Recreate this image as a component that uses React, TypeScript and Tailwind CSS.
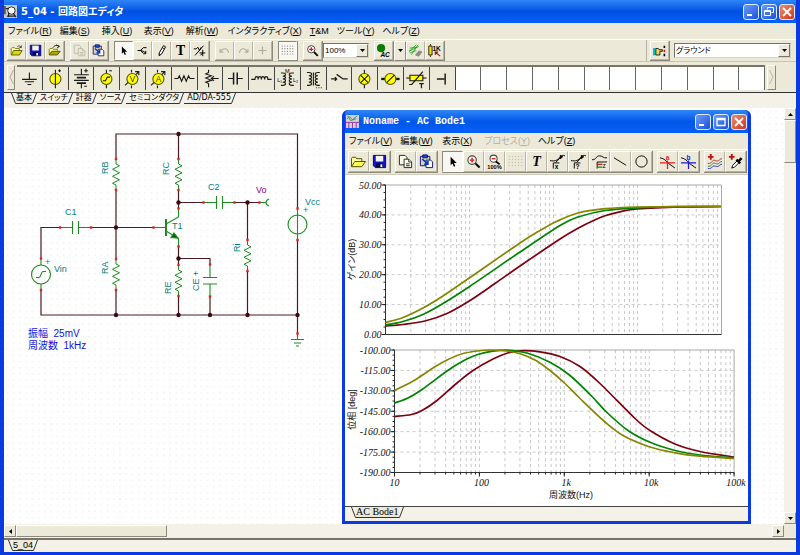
import type { ReactNode } from "react";
import clsx from "clsx";

type Point = [number, number];

interface ToolItem {
  label: string;
  icon: ReactNode;
  pressed?: boolean;
  disabled?: boolean;
}

/* ---------- toolbar icons ---------- */

const Icon = ({ children }: { children: ReactNode }) => (
  <svg viewBox="0 0 16 16" fill="none" stroke="#000" strokeWidth="1" className="w-full h-full" aria-hidden="true">
    {children}
  </svg>
);

const openIcon = (
  <Icon>
    <path d="M1.500 13V5.500l1-1h3l1 1h5v2.500" fill="#ffff9c" stroke="#6b6b00" />
    <path d="M1.500 13.500l3-5.500h10.500l-3.500 5.500z" fill="#e0d800" stroke="#4a4a00" />
    <path d="M9 3.200c2-1.500 3.500-1 4.500.8M14 1.800v2.500h-2.500" strokeWidth=".8" />
  </Icon>
);

const bodeOpenIcon = (
  <Icon>
    <path d="M.500 13V4.500l1-1h3.500l1 1.500h5.500v3" fill="#ffff9c" stroke="#4a4a00" />
    <path d="M.500 13.500l3.500-5.500h11.500l-4 5.500z" fill="#ffff50" stroke="#4a4a00" />
  </Icon>
);

const openAltIcon = (
  <Icon>
    <path d="M1.500 13V6.500l1-1h3l1 1h5v2" fill="#ffff9c" stroke="#6b6b00" />
    <path d="M1.500 13.500l3-4.500h10.500l-3.500 4.500z" fill="#a8a800" stroke="#4a4a00" />
    <path d="M6 4.500c2-3 5-3.500 8-1.500M10 1l4 2-3 2" />
  </Icon>
);

const saveIcon = (
  <Icon>
    <path d="M1.500 1.500h13v13h-11l-2-2z" fill="#1414c8" stroke="#000060" />
    <path d="M4 2h8v6H4z" fill="#f4f4f4" stroke="none" />
    <path d="M4.500 10h7v4h-7z" fill="#000040" stroke="none" />
    <path d="M9 11h2v3H9z" fill="#fff" stroke="none" />
  </Icon>
);

const copyShape = (stroke: string, fill: string) => (
  <Icon>
    <g stroke={stroke} fill={fill}>
      <path d="M1.500 1.500h6l2 2v8h-8z" />
      <path d="M6.500 5.500h5l3 3v6h-8z" />
      <path d="M11.500 5.500v3h3M8.500 10.500h4M8.500 12.500h4" />
    </g>
  </Icon>
);

const pasteIcon = (
  <Icon>
    <path d="M1.500 2.500h10v10h-10z" fill="#d8d4b0" stroke="#101080" />
    <path d="M4 1h5v3H4z" fill="#2050e0" stroke="#001070" />
    <path d="M7.500 6.500h5l2 2v6h-7z" fill="#fff" stroke="#101060" />
    <path d="M3.500 5.500l6 5M9.500 7v4h-4" stroke="#0030c0" strokeWidth="1.600" />
  </Icon>
);

const cursorIcon = (
  <Icon>
    <path d="M6 3v9l2-2 1.500 3.500 1.500-.7L9.500 9.500h3z" fill="#000" stroke="none" />
  </Icon>
);

const wireIcon = (
  <Icon>
    <path d="M2 8h5M13 4.500H9L5.500 8 9 11.500M7 8l5 3M12 8.500v3.500H9" strokeWidth="1.200" />
  </Icon>
);

const pencilIcon = (
  <Icon>
    <path d="M10.500 2l2.500 1.500-5 9-3 1.800.3-3.500z" fill="#fff" strokeWidth="1.200" />
    <path d="M9 4.500l2.500 1.500M5 12l1.500 1.500" />
  </Icon>
);

const textIcon = (
  <Icon>
    <text x="8" y="14" textAnchor="middle" fill="#000" stroke="none" fontSize="17" fontWeight="700" fontFamily="'Liberation Serif', serif">T</text>
  </Icon>
);

const italicTextIcon = (
  <Icon>
    <text x="8" y="13" textAnchor="middle" fill="#000" stroke="none" fontSize="15" fontWeight="700" fontStyle="italic" fontFamily="'Liberation Serif', serif">T</text>
  </Icon>
);

const rotateIcon = (
  <Icon>
    <path d="M1 6h3l2-2 2 4 2-4M2.500 14L13 2M8 11h7M12 7v8M9 14l3-3" strokeWidth="1.200" />
  </Icon>
);

const undoIcon = (
  <Icon>
    <path d="M2.500 10V6M2.500 10h4M3 9.500c3-5 9-5 10 1.500" stroke="#b0ac9c" strokeWidth="1.300" />
  </Icon>
);

const redoIcon = (
  <Icon>
    <path d="M13.500 10V6M13.500 10h-4M13 9.500c-3-5-9-5-10 1.500" stroke="#b0ac9c" strokeWidth="1.300" />
  </Icon>
);

const moveIcon = (
  <Icon>
    <path d="M8 3v10M3 8h10" stroke="#b0ac9c" strokeWidth="1.500" />
  </Icon>
);

const dots = [1.5, 4.75, 8, 11.25, 14.5];
const gridIcon = (color: string) => (
  <Icon>
    {dots.map((x) => dots.slice(0, 4).map((y) => (
      <circle key={`${x}-${y}`} cx={x} cy={y + 1} r=".7" fill={color} stroke="none" />
    )))}
  </Icon>
);

const zoomInIcon = (
  <Icon>
    <circle cx="6.500" cy="6.500" r="4.500" fill="#fff" stroke="#444" strokeWidth="1.200" />
    <path d="M6.500 4v5M4 6.500h5" stroke="#e01010" strokeWidth="1.500" />
    <path d="M10 10l4.500 4.500" strokeWidth="2.200" />
  </Icon>
);

const zoomOutIcon = (
  <Icon>
    <circle cx="7" cy="5" r="3.800" fill="#fff" stroke="#444" strokeWidth="1.100" />
    <path d="M5 5h4" stroke="#e01010" strokeWidth="1.400" />
    <path d="M9.500 8l4 3" strokeWidth="1.800" />
    <text x="8" y="15.500" textAnchor="middle" fill="#000" stroke="none" fontSize="6" fontWeight="700" fontFamily="'Liberation Sans', sans-serif">100%</text>
  </Icon>
);

const acIcon = (
  <Icon>
    <circle cx="5" cy="5" r="4.800" fill="#008000" stroke="#004000" strokeWidth=".5" />
    <text x="10" y="15.500" textAnchor="middle" fill="#000" stroke="none" fontSize="8" fontStyle="italic" fontWeight="700" fontFamily="'Liberation Sans', sans-serif">AC</text>
  </Icon>
);

const probeIcon = (
  <Icon>
    <path d="M0 9l9-8M0 9l12-6M3 13L11 1M1 5l9-1M1 11l8-3" stroke="#18a018" />
    <path d="M8 13.500l4-5 4 1-4 5.500z" fill="#8a8a86" stroke="#8a8a86" />
  </Icon>
);

const meterIcon = (
  <Icon>
    <path d="M3 0v2M3 14v2" />
    <path d="M1 2.500h4v11H1z" fill="#f4e800" />
    <text x="10.500" y="8" textAnchor="middle" fill="#000" stroke="none" fontSize="8" fontWeight="700" fontFamily="'Liberation Sans', sans-serif">1K</text>
    <path d="M15 15L9 10M9 13.500V10h3.500" stroke="#a01010" strokeWidth="1.300" />
  </Icon>
);

const handIcon = (
  <Icon>
    <path d="M0 5h3v9H0z" fill="#10b8c0" stroke="none" />
    <path d="M3.500 5.500h3l1 1.500h4v2h-3v4.500h-5z" fill="#e8d860" />
    <path d="M14 2v3M14 12v3" strokeWidth="2" />
    <path d="M14 7v3" stroke="#e01010" strokeWidth="2" />
  </Icon>
);

const curveLabelIcon = (label: string) => (
  <Icon>
    <path d="M0 7c5 1 8 0 11-4 1-1.500 3-2 5-1M6 9l6-6" />
    <path d="M11 1.500l2.500 1.500-2.500 2z" fill="#000" />
    <path d="M3.500 15.500V9.500H10" />
    <text x="7" y="15.500" textAnchor="middle" fill="#000" stroke="none" fontSize="7" fontWeight="700" fontFamily="'Liberation Sans', sans-serif">{label}</text>
  </Icon>
);

const legendIcon = (
  <Icon>
    <path d="M0 6c4 1 4-4 8-4s4 3 8 2" />
    <path d="M5.500 15.500V8.500H16" />
    <path d="M6 11h5" stroke="#d01010" strokeWidth="1.300" />
    <path d="M6 14h5" stroke="#108010" strokeWidth="1.300" />
    <text x="13" y="15" textAnchor="middle" fill="#000" stroke="none" fontSize="7" fontFamily="'Liberation Sans', sans-serif">z</text>
  </Icon>
);

const lineIcon = (
  <Icon>
    <path d="M1 4l13 8" />
  </Icon>
);

const circleIcon = (
  <Icon>
    <circle cx="8" cy="8" r="6" />
  </Icon>
);

const axisIcon = (name: string, color: string) => (
  <Icon>
    <path d="M0 4c5 1 6 3 9 6l7 5" />
    <path d="M0 9.500h16M8 7v9" stroke={color} strokeWidth="1.300" />
    <text x="8" y="6.500" textAnchor="middle" fill={color} stroke="none" fontSize="7" fontWeight="700" fontFamily="'Liberation Sans', sans-serif">{name}</text>
  </Icon>
);

const addCurveIcon = (
  <Icon>
    <path d="M4 0v6M1 3h6" stroke="#c01010" strokeWidth="2" />
    <path d="M1 10c5 1 4-5 8-3s4-2 7-2" stroke="#c02020" />
    <path d="M1 13c5 1 4-5 8-3s4-2 7-2" stroke="#109010" />
    <path d="M1 15.500c5 1 4-4 8-2.500s4-2 7-2" stroke="#2020d0" />
  </Icon>
);

const pickColorIcon = (
  <Icon>
    <path d="M4 0v6M1 3h6" stroke="#c01010" strokeWidth="2" />
    <path d="M4 15l1-3 5-5 2 2-5 5z" fill="#fff" />
    <path d="M9 6l4 4M11 8l3.500-3.500" strokeWidth="2.600" />
  </Icon>
);

/* ---------- component palette symbols ---------- */

const Ball = () => <circle cx="13" cy="13" r="6" fill="#ffff00" stroke="#555500" />;

const ballText = (letter: string) => (
  <>
    <path d="M5 20L20 5M16 5h4v4M12 3v3M12 20v3" />
    <Ball />
    <text x="13" y="16" textAnchor="middle" fill="#333300" stroke="none" fontSize="9" fontFamily="'Liberation Sans', sans-serif">{letter}</text>
  </>
);

const parts: { name: string; symbol: ReactNode }[] = [
  { name: "Ground", symbol: <path d="M13 6v7M5 13.500h16M8 16h10M11 19h4" /> },
  { name: "Voltage source", symbol: <><path d="M13 3v20M16 4h3M17.500 2.500v3" /><Ball /><path d="M13 7v12" /></> },
  { name: "Battery", symbol: <><path d="M13 2v6M13 18v5M5 8.500h16M5 14.500h16M16 4h4M18 2v4M16 21h3" /><path d="M8 11.500h10M8 17.500h10" strokeWidth="2" /></> },
  { name: "Generator", symbol: <><path d="M13 3v20M16 4h3" /><Ball /><path d="M9 15h3l2-4h3" /></> },
  { name: "Voltmeter", symbol: ballText("V") },
  { name: "Ammeter", symbol: ballText("A") },
  { name: "Resistor", symbol: <path d="M2 12.500h4l1.500-3 2.500 6 2.500-6 2.500 6 2.500-6 1.500 3H24" /> },
  { name: "Potentiometer", symbol: <path d="M11 3v3l-3 1.500 6 2-6 2.500 6 2.500-6 2 3 1.500v4M22 12.500h-7M17 10l-3 2.500 3 2.500" /> },
  { name: "Capacitor", symbol: <><path d="M5 12.500h6M15 12.500h6" /><path d="M11 6v13M15 6v13" strokeWidth="1.600" /></> },
  { name: "Inductor", symbol: <path d="M2 13.500h4c0-4 3.500-4 3.500 0 0-4 3.500-4 3.500 0 0-4 3.500-4 3.500 0 0-4 3.500-4 3.500 0H24" /> },
  {
    name: "Coupled inductors",
    symbol: (
      <>
        <path d="M6 6.500h2c4 0 4 3.500 0 3.500 4 0 4 3 0 3 4 0 4 3.500 0 3.500 4 0 4 3.500 0 3.500H6M20 6.500h-2c-4 0-4 3.500 0 3.500-4 0-4 3 0 3-4 0-4 3.500 0 3.500-4 0-4 3.500 0 3.500h2" />
        <g fill="#000" stroke="none" fontSize="6" fontFamily="'Liberation Sans', sans-serif">
          <text x="10.500" y="6">M</text>
          <text x="2" y="16">L₁</text>
          <text x="19" y="16">L₂</text>
        </g>
      </>
    ),
  },
  { name: "Transformer", symbol: <><path d="M6 6h2c4 0 4 3.500 0 3.500 4 0 4 3.500 0 3.500 4 0 4 3.500 0 3.500 4 0 4 3.500 0 3.500H6M20 6h-2c-4 0-4 3.500 0 3.500-4 0-4 3.500 0 3.500-4 0-4 3.500 0 3.500-4 0-4 3.500 0 3.500h2M13 6v14" /><path d="M16 22.500h7" strokeDasharray="1 1.500" /></> },
  { name: "Switch", symbol: <path d="M4 13h6M8 11l2 2-2 2M10 8l7 5h5" strokeWidth="1.400" /> },
  { name: "Lamp", symbol: <><path d="M13 3v20" /><Ball /><path d="M9 9l8 8M17 9l-8 8" /></> },
  { name: "Motor", symbol: <><path d="M3 13h20" strokeWidth="2.500" /><Ball /><path d="M9 17l8-8" /></> },
  { name: "Thermistor", symbol: <><path d="M2 12h22" /><path d="M6 9h14v6H6z" fill="#ffff00" /><path d="M5 19h3L20 5M16 18h5M18.500 18v5" strokeWidth="1.300" /></> },
  { name: "Terminal", symbol: <path d="M7 13h8M16 7v12" strokeWidth="1.600" /> },
];

const emptySlots = Array.from({ length: 12 }, (_, i) => i);

/* ---------- small controls ---------- */

function ToolGroup({ items, size }: { items: ToolItem[]; size: "sm" | "md" }) {
  return (
    <div className="flex border-r border-b border-[#8c897c]">
      {items.map((item) => (
        <button
          key={item.label}
          type="button"
          title={item.label}
          aria-label={item.label}
          disabled={item.disabled}
          className={clsx(
            "flex items-center justify-center border p-[2px]",
            size === "sm" ? "w-[19px] h-[19px]" : "w-[21px] h-[21px]",
            item.pressed
              ? "bg-[#f8f7f2] border-l-[#8c897c] border-t-[#8c897c] border-r-white border-b-white"
              : "bg-[#ece9d8] border-l-white border-t-white border-r-[#b8b4a3] border-b-[#b8b4a3]"
          )}
        >
          {item.icon}
        </button>
      ))}
    </div>
  );
}

function Combo({ label, value, className }: { label: string; value: string; className: string }) {
  return (
    <div className={clsx("relative h-[15px] bg-white border border-l-[#77756a] border-t-[#77756a] border-r-[#d8d4c4] border-b-[#d8d4c4]", className)}>
      <select
        aria-label={label}
        defaultValue={value}
        className="block appearance-none w-full h-full bg-transparent pl-px text-[8px] leading-[12px] outline-none"
      >
        <option>{value}</option>
      </select>
      <span className="absolute right-0 top-0 bottom-0 w-3 flex items-center justify-center bg-[#ece9d8] border border-l-white border-t-white border-r-[#77756a] border-b-[#77756a] pointer-events-none">
        <Arrow d="M1 2h5L3.500 5z" />
      </span>
    </div>
  );
}

const Arrow = ({ d }: { d: string }) => (
  <svg viewBox="0 0 7 7" className="w-[7px] h-[7px]" aria-hidden="true">
    <path d={d} />
  </svg>
);

function ScrollButton({ label, d }: { label: string; d: string }) {
  return (
    <button
      type="button"
      aria-label={label}
      className="w-3 h-3 shrink-0 flex items-center justify-center bg-[#ece9d8] border border-l-white border-t-white border-r-[#8c897c] border-b-[#8c897c]"
    >
      <Arrow d={d} />
    </button>
  );
}

function WindowButtons({ restore }: { restore?: boolean }) {
  const blue = "bg-linear-to-br from-[#6b9bf8] to-[#1c4fd8]";
  const base = "w-4 h-4 rounded-[3px] border border-[#dfe9ff] flex items-center justify-center";
  return (
    <div className="flex gap-[2px]">
      <button type="button" aria-label="Minimize" className={clsx(base, blue)}>
        <svg viewBox="0 0 12 12" className="w-3 h-3"><path d="M2 8h5v2H2z" fill="#fff" /></svg>
      </button>
      <button type="button" aria-label={restore ? "Restore" : "Maximize"} className={clsx(base, blue)}>
        <svg viewBox="0 0 12 12" className="w-3 h-3" fill="none" stroke="#fff">
          {restore ? (
            <path d="M4.500 3.500v-2h6v5h-2M1.500 4.500h6v5h-6zM1.500 5.500h6" />
          ) : (
            <path d="M2 2.500h8v7H2zM2 3.500h8" strokeWidth="1.300" />
          )}
        </svg>
      </button>
      <button type="button" aria-label="Close" className={clsx(base, "bg-linear-to-br from-[#f08a6a] to-[#cc3310]")}>
        <svg viewBox="0 0 12 12" className="w-3 h-3" stroke="#fff" strokeWidth="1.800"><path d="M2 2l8 8M10 2l-8 8" /></svg>
      </button>
    </div>
  );
}

interface MenuEntry {
  text: string;
  hotkey: string;
  disabled?: boolean;
}

function MenuBar({ items, label, className }: { items: MenuEntry[]; label: string; className: string }) {
  return (
    <nav aria-label={label} className={clsx("flex h-4 items-center gap-2 bg-[#ece9d8] whitespace-nowrap text-[9px] leading-[14px]", className)}>
      {items.map(({ text, hotkey, disabled }) => (
        <button
          key={text + hotkey}
          type="button"
          disabled={disabled}
          className={clsx("text-left", text.length === 2 && "min-w-[34px]", disabled ? "text-[#b3af9f]" : "text-black")}
        >
          {text === "T&M" ? <><u>T</u>&amp;M</> : <>{text}(<u>{hotkey}</u>)</>}
        </button>
      ))}
    </nav>
  );
}

/* ---------- schematic ---------- */

const WIRE = "#4a1a20";
const PART = "#1f8a1f";

// zigzag body of a vertical resistor with its two leads
function VResistor({ x, y }: { x: number; y: number }) {
  return (
    <>
      <path
        d={`M${x} ${y}v5l3.500 1.800-7 3.500 7 3.500-7 3.500 7 3.500-7 3.500 3.500 1.700v5`}
        stroke={PART}
        fill="none"
      />
      <Pins points={[[x, y], [x, y + 31]]} />
    </>
  );
}

const Pins = ({ points }: { points: Point[] }) => (
  <>
    {points.map(([x, y]) => (
      <rect key={`${x}-${y}`} x={x - 1.2} y={y - 1.2} width="2.400" height="2.400" fill="#e02020" stroke="none" />
    ))}
  </>
);

const nodes: Point[] = [
  [178.5, 134], [178.5, 202.5], [116, 227.5], [178.5, 258.5], [247.5, 202.5],
  [116, 315], [178.5, 315], [210, 315], [247.5, 315], [297.5, 315],
];

const labels: { text: string; x: number; y: number; rotated?: boolean; color?: string }[] = [
  { text: "C1", x: 65, y: 215 },
  { text: "C2", x: 208, y: 190 },
  { text: "T1", x: 172, y: 229 },
  { text: "Vin", x: 54, y: 272 },
  { text: "+", x: 45, y: 265 },
  { text: "Vcc", x: 305, y: 205 },
  { text: "+", x: 303, y: 213 },
  { text: "Vo", x: 256, y: 193, color: "#8a008a" },
  { text: "RB", x: 108, y: 174, rotated: true },
  { text: "RC", x: 169, y: 175, rotated: true },
  { text: "RA", x: 108, y: 274, rotated: true },
  { text: "RE", x: 171, y: 294, rotated: true },
  { text: "CE +", x: 199, y: 291, rotated: true },
  { text: "Ri", x: 240, y: 252, rotated: true },
];

function Schematic() {
  return (
    <svg className="block w-full h-full" role="img" aria-label="5_04">
      <defs>
        <pattern id="dots" width="6.250" height="6.250" patternUnits="userSpaceOnUse">
          <rect x="3" y="3" width="1" height="1" fill="#dcdce0" />
        </pattern>
      </defs>
      <rect width="100%" height="100%" fill="url(#dots)" />
      <g transform="translate(-4 -108)" fill="none">
        <g stroke={WIRE} strokeWidth="1.200">
          <path d="M116 159V134H297.500V208M178.500 134v25M116 190v69M116 290v25M178.500 190v18M178.500 246v18M178.500 296v19" />
          <path d="M60 227.500H41V258M41 290v25H297.500V240M91 227.500h62M178.500 202.500h25M234.500 202.500h25M247.500 202.500v37M247.500 271v44" />
          <path d="M178.500 258.500H210v6M210 296v19M297.500 315v18" />
        </g>
        <g stroke={PART} strokeWidth="1.100">
          <path d="M60 227.500h12.500M78.500 227.500H91M72.500 221v13M78.500 221v13" />
          <path d="M204 202.500h12.500M222.500 202.500h12M216.500 196v13M222.500 196v13" />
          <path d="M210 265v12.500M210 284v12M203 277.500h14M203 284h14" />
          <circle cx="41" cy="274.500" r="9.500" />
          <path d="M41 259v6M41 284v6M36 277.500h3c2 0 2-6 4-6h3" />
          <circle cx="297.500" cy="224.500" r="9.500" />
          <path d="M297.500 209v31" />
          <path d="M297.500 334v5.500M291 339.500h13M294 343h7M296 346h3" />
          <path d="M260 202.500h6M269 199c-4 1.500-4 5.500 0 7" />
          <path d="M153.500 227.500H166M166 224l12.500-7v-8M166 231l12.500 7.500v8" />
          <path d="M166 219v17" strokeWidth="2" />
          <path d="M178 238l-4-5-3 4.500z" fill="#006000" />
        </g>
        <VResistor x={116} y={159} />
        <VResistor x={178.5} y={159} />
        <VResistor x={116} y={259} />
        <VResistor x={178.5} y={265} />
        <VResistor x={247.5} y={240} />
        <Pins
          points={[
            [60, 227.5], [91, 227.5], [153.5, 227.5], [178.5, 208.5], [178.5, 246.5], [203.5, 202.5], [234.5, 202.5],
            [259.5, 202.5], [210, 264.5], [210, 296.5], [41, 258.5], [41, 290], [297.5, 208.5], [297.5, 240], [297.5, 333.5],
          ]}
        />
        {nodes.map(([x, y]) => (
          <circle key={`${x}-${y}`} cx={x} cy={y} r="2.200" fill="#3a0c10" />
        ))}
        <g fontSize="9" fontFamily="'Liberation Sans', sans-serif" stroke="none">
          {labels.map(({ text, x, y, rotated, color = "#008080" }) => (
            <text key={`${text}-${x}`} x={x} y={y} fill={color} transform={rotated ? `rotate(-90 ${x} ${y})` : undefined}>
              {text}
            </text>
          ))}
        </g>
        <g fill="#1010e0" stroke="none" fontSize="10" fontFamily="'Liberation Sans', 'Noto Sans CJK JP', sans-serif">
          <text x="28" y="337">振幅&nbsp; 25mV</text>
          <text x="28" y="349">周波数&nbsp; 1kHz</text>
        </g>
      </g>
    </svg>
  );
}

/* ---------- bode charts ---------- */

const OLIVE = "#858500";
const GREEN = "#008400";
const MAROON = "#7c0010";

const gainCurves: { color: string; points: Point[] }[] = [
  {
    color: MAROON,
    points: [[385.5, 325.5], [403, 324], [425, 320.5], [447, 313], [470, 300], [495, 283], [520, 265.5], [560, 238.5], [578, 227.8], [593, 220.3], [605, 215.3], [622, 210.8], [637, 208.5], [680, 206.5], [721, 206]],
  },
  {
    color: GREEN,
    points: [[385.5, 324.5], [403, 321], [423, 314], [443, 303], [470, 285.7], [520, 251.5], [560, 225], [578, 216.5], [605, 210], [637, 207.3], [680, 206.2], [721, 206]],
  },
  {
    color: OLIVE,
    points: [[385.5, 322], [403, 317], [423, 307.5], [443, 295.5], [470, 277], [520, 242.5], [540, 230], [557, 220.8], [578, 212.5], [605, 208.2], [637, 206.5], [680, 206], [721, 206]],
  },
];

const phaseCurves: { color: string; points: Point[] }[] = [
  {
    color: MAROON,
    points: [[394.5, 416], [411.5, 414], [422, 410], [437, 400], [457, 382.5], [473, 370], [493, 358.5], [507, 352.7], [520, 350.3], [540, 351.3], [560, 356], [580, 366], [600, 383], [635, 418], [650, 430], [675, 443.5], [700, 451], [734, 456.5]],
  },
  {
    color: GREEN,
    points: [[394.5, 402.5], [408, 397.5], [422, 389], [447, 370.5], [463, 360.5], [477, 354.3], [493, 350.7], [510, 349.8], [527, 352.5], [550, 361.7], [570, 375], [592, 396], [607, 412], [628, 430], [650, 441.8], [675, 450], [700, 454.5], [734, 457.3]],
  },
  {
    color: OLIVE,
    points: [[394.5, 390], [415, 379.5], [437, 365], [457, 355], [473, 351], [490, 349.5], [507, 350.5], [520, 353.3], [535, 359.5], [550, 370], [565, 383], [580, 398], [605, 421.5], [623, 435], [650, 446.5], [675, 452.3], [700, 455.7], [734, 458]],
  },
];

// Catmull-Rom spline through the sampled points
function smooth(points: Point[]) {
  let d = `M${points[0][0]} ${points[0][1]}`;
  for (let i = 0; i < points.length - 1; i++) {
    const p0 = points[Math.max(i - 1, 0)];
    const p1 = points[i];
    const p2 = points[i + 1];
    const p3 = points[Math.min(i + 2, points.length - 1)];
    d += `C${p1[0] + (p2[0] - p0[0]) / 6} ${p1[1] + (p2[1] - p0[1]) / 6} ${p2[0] - (p3[0] - p1[0]) / 6} ${p2[1] - (p3[1] - p1[1]) / 6} ${p2[0]} ${p2[1]}`;
  }
  return d;
}

interface ChartProps {
  left: number;
  top: number;
  decade: number;
  height: number;
  ticks: string[];
  xTicks?: string[];
  curves: { color: string; points: Point[] }[];
}

function Chart({ left, top, decade, height, ticks, xTicks, curves }: ChartProps) {
  const right = left + decade * 4;
  const bottom = top + height;
  const step = height / (ticks.length - 1);
  const verticals = [0, 1, 2, 3].flatMap((d) =>
    [2, 3, 4, 5, 6, 7, 8, 9, 10].map((n) => left + decade * (d + Math.log10(n)))
  );
  const minor = Array.from({ length: (ticks.length - 1) * 4 }, (_, i) => top + (step / 4) * i);

  return (
    <g fill="none">
      <g stroke="#c8c8c8" strokeDasharray="3 3">
        {verticals.slice(0, -1).map((x) => <path key={x} d={`M${x} ${top}V${bottom}`} />)}
        {ticks.slice(1, -1).map((t, i) => <path key={t} d={`M${left} ${top + step * (i + 1)}H${right}`} />)}
      </g>
      <path d={`M${left} ${top}H${right}V${bottom}`} stroke="#a8a8a8" />
      <path d={`M${left} ${top}V${bottom}H${right}`} stroke="#333" />
      <g stroke="#222">
        {ticks.map((t, i) => <path key={t} d={`M${left - 4} ${top + step * i}h4`} />)}
        {minor.map((y) => <path key={y} d={`M${left - 2} ${y}h2`} />)}
        {xTicks && verticals.map((x) => <path key={x} d={`M${x} ${bottom}v2`} />)}
        {xTicks && xTicks.map((t, i) => <path key={t} d={`M${left + decade * i} ${bottom}v4`} />)}
      </g>
      {curves.map(({ color, points }) => (
        <path key={color} d={smooth(points)} stroke={color} strokeWidth="1.700" />
      ))}
      <g fill="#111" stroke="none" fontSize="10" fontStyle="italic" fontFamily="'Liberation Serif', serif">
        {ticks.map((t, i) => (
          <text key={t} x={left - 4} y={top + step * i + 3.5} textAnchor="end">{t}</text>
        ))}
        {xTicks && xTicks.map((t, i) => (
          <text key={t} x={left + decade * i + (i ? 2 : 0)} y={bottom + 13} textAnchor="middle">{t}</text>
        ))}
      </g>
    </g>
  );
}

function BodePlot() {
  return (
    <svg viewBox="345 175 403 330" className="block w-full h-full" role="img" aria-label="AC Bode1">
      <Chart
        left={385.5}
        top={184.5}
        decade={84}
        height={149.5}
        ticks={["50.00", "40.00", "30.00", "20.00", "10.00", "0.00"]}
        curves={gainCurves}
      />
      <Chart
        left={394.5}
        top={349.5}
        decade={84.9}
        height={122.5}
        ticks={["-100.00", "-115.00", "-130.00", "-145.00", "-160.00", "-175.00", "-190.00"]}
        xTicks={["10", "100", "1k", "10k", "100k"]}
        curves={phaseCurves}
      />
      <g fill="#111" fontSize="9" fontFamily="'Liberation Sans', 'Noto Sans CJK JP', sans-serif">
        <text x="571" y="497" textAnchor="middle">周波数(Hz)</text>
        <text transform="translate(355 259) rotate(-90)" textAnchor="middle">ゲイン(dB)</text>
        <text transform="translate(355 409) rotate(-90)" textAnchor="middle">位相 [deg]</text>
      </g>
    </svg>
  );
}

const bodeTools: ToolItem[][] = [
  [{ label: "Open", icon: bodeOpenIcon }, { label: "Save", icon: saveIcon }],
  [{ label: "Copy", icon: copyShape("#222", "#fffff0") }, { label: "Paste", icon: pasteIcon }],
  [
    { label: "Select", icon: cursorIcon, pressed: true },
    { label: "Zoom in", icon: zoomInIcon },
    { label: "Zoom 100%", icon: zoomOutIcon },
    { label: "Grid", icon: gridIcon("#c4c0b0"), disabled: true },
    { label: "Text", icon: italicTextIcon },
    { label: "Curve label", icon: curveLabelIcon("x") },
    { label: "Curve query", icon: curveLabelIcon("?") },
    { label: "Legend", icon: legendIcon },
    { label: "Line", icon: lineIcon },
    { label: "Circle", icon: circleIcon },
  ],
  [{ label: "Cursor a", icon: axisIcon("a", "#e81818") }, { label: "Cursor b", icon: axisIcon("b", "#1818e0") }],
  [{ label: "Add curves", icon: addCurveIcon }, { label: "Pick colour", icon: pickColorIcon }],
];

const bodeMenu: MenuEntry[] = [
  { text: "ファイル", hotkey: "V" },
  { text: "編集", hotkey: "W" },
  { text: "表示", hotkey: "X" },
  { text: "プロセス", hotkey: "Y", disabled: true },
  { text: "ヘルプ", hotkey: "Z" },
];

function BodeWindow() {
  return (
    <section className="absolute left-[338px] top-[2px] w-[409px] h-[414px] flex flex-col rounded-t-md border-x-[3px] border-b-[3px] border-[#0b3ae0] bg-[#0b3ae0]">
      <header className="h-[23px] shrink-0 flex items-center px-px rounded-t-sm bg-linear-to-b from-[#2f86f8] via-[#0356e8] to-[#0560fa]">
        <svg viewBox="0 0 14 14" className="w-[13px] h-[13px] mr-1" fill="none" aria-hidden="true">
          <path d="M0 0h14v14H0z" fill="#cfd0dc" />
          <path d="M1 4l3-2 3 3 5-4M2 1l3 5 6-2" stroke="#28a048" />
          <path d="M0 8h14M3 8v6M7 8v6M11 8v6" stroke="#a030a0" />
        </svg>
        <h2 className="flex-1 whitespace-nowrap text-white font-bold text-[10px] leading-4 font-['Liberation_Mono',monospace]">Noname - AC Bode1</h2>
        <WindowButtons />
      </header>
      <MenuBar items={bodeMenu} label="Bode" className="shrink-0 pl-1" />
      <div className="h-[26px] shrink-0 flex items-center gap-1 pl-[3px] bg-[#ece9d8] border-t border-t-white border-b border-b-[#d0ccbc]">
        {bodeTools.map((items) => (
          <ToolGroup key={items[0].label} items={items} size="md" />
        ))}
      </div>
      <div className="flex-1 min-h-0 bg-white">
        <BodePlot />
      </div>
      <div className="h-[15px] shrink-0 bg-[#f4f2e8] border-t border-[#444] pl-[6px] flex items-start">
        <SheetTab selected className="font-['Liberation_Serif',serif] text-[10px]">AC Bode1</SheetTab>
      </div>
    </section>
  );
}

/* ---------- sheet tabs ---------- */

const Slash = ({ back }: { back?: boolean }) => (
  <svg viewBox="0 0 5 11" className="w-[5px] h-[11px] shrink-0" fill="none" stroke="#333" aria-hidden="true">
    <path d={back ? "M.5 0L4.500 10.500H5" : "M4.500 0L.5 10.500H0"} />
  </svg>
);

function SheetTab({ children, selected, className }: { children: ReactNode; selected?: boolean; className?: string }) {
  return (
    <div className="flex">
      {selected && <Slash back />}
      <button
        type="button"
        aria-pressed={!!selected}
        className={clsx("h-[11px] whitespace-nowrap border-b border-[#333] leading-[10px]", selected ? "bg-[#ece9d8]" : "bg-[#f4f2e8] pl-[3px]", className)}
      >
        {children}
      </button>
      <Slash />
    </div>
  );
}

/* ---------- main window ---------- */

const mainMenu: MenuEntry[] = [
  { text: "ファイル", hotkey: "R" },
  { text: "編集", hotkey: "S" },
  { text: "挿入", hotkey: "U" },
  { text: "表示", hotkey: "V" },
  { text: "解析", hotkey: "W" },
  { text: "インタラクティブ", hotkey: "X" },
  { text: "T&M", hotkey: "" },
  { text: "ツール", hotkey: "Y" },
  { text: "ヘルプ", hotkey: "Z" },
];

const mainTools: ToolItem[][] = [
  [{ label: "Open", icon: openIcon }, { label: "Save", icon: saveIcon }, { label: "Open example", icon: openAltIcon }],
  [{ label: "Copy", icon: copyShape("#b8b4a4", "#ece9d8"), disabled: true }, { label: "Paste", icon: pasteIcon }],
  [
    { label: "Select", icon: cursorIcon, pressed: true },
    { label: "Last component", icon: wireIcon },
    { label: "Wire", icon: pencilIcon },
    { label: "Text", icon: textIcon },
    { label: "Rotate", icon: rotateIcon },
  ],
  [
    { label: "Undo", icon: undoIcon, disabled: true },
    { label: "Redo", icon: redoIcon, disabled: true },
    { label: "Move", icon: moveIcon, disabled: true },
  ],
  [{ label: "Grid", icon: gridIcon("#77756a"), pressed: true }],
];

const paletteTabs = ["基本", "スイッチ", "計器", "ソース", "セミコンダクタ", "AD/DA-555"];

export default function App() {
  return (
    <main className="min-h-screen w-full flex flex-col overflow-hidden text-black border-x-4 border-b-[3px] border-[#0b3ae0] bg-[#ece9d8] font-['Liberation_Sans','Noto_Sans_CJK_JP',sans-serif] [font-feature-settings:'palt']">
      <header className="h-[23px] shrink-0 flex items-center pr-px bg-linear-to-b from-[#2f86f8] via-[#0350e0] to-[#0560fa]">
        <svg viewBox="0 0 14 14" className="w-[13px] h-[13px] mr-1" fill="none" aria-hidden="true">
          <path d="M0 0h14v14H0z" fill="#c8ccc8" />
          <circle cx="8" cy="6" r="4" fill="#fff" stroke="#222" />
          <path d="M1 1v9M3 12h9M5 8v5M10 9l3 4M2 4h3" stroke="#222" strokeWidth="1.300" />
        </svg>
        <h1 className="flex-1 whitespace-nowrap text-white font-bold text-[10px] leading-4 font-['DejaVu_Sans','Noto_Sans_CJK_JP',sans-serif]">5_04 - 回路図エディタ</h1>
        <WindowButtons restore />
      </header>

      <MenuBar items={mainMenu} label="Main" className="shrink-0 pl-1" />

      <div className="h-[23px] shrink-0 flex items-center bg-[#ece9d8] border-t border-t-white border-b border-b-[#c8c4b4]">
        <div className="flex items-center gap-[5px] pl-[3px]">
          {mainTools.map((items) => (
            <ToolGroup key={items[0].label} items={items} size="sm" />
          ))}
          <div className="flex items-center">
            <ToolGroup size="sm" items={[{ label: "Zoom", icon: zoomInIcon }]} />
            <Combo label="Zoom" value="100%" className="w-[46px]" />
          </div>
          <div className="flex">
            <ToolGroup size="sm" items={[{ label: "AC analysis", icon: acIcon }]} />
            <button
              type="button"
              aria-label="Analysis options"
              className="w-3 flex items-center justify-center border border-l-white border-t-white border-r-[#8c897c] border-b-[#8c897c]"
            >
              <Arrow d="M1 2h5L3.500 5z" />
            </button>
            <ToolGroup size="sm" items={[{ label: "Probe", icon: probeIcon }, { label: "Meter", icon: meterIcon }]} />
          </div>
        </div>
        <div className="ml-auto h-full flex items-center gap-1 pl-[3px] pr-[5px] border-l border-[#b8b4a3]">
          <ToolGroup size="sm" items={[{ label: "Find component", icon: handIcon }]} />
          <Combo label="Component" value="グラウンド" className="w-[117px]" />
        </div>
      </div>

      <div className="h-[30px] shrink-0 flex items-center pl-[3px] pr-5 bg-[#ece9d8]">
        <button type="button" aria-label="Previous parts" className="w-2 h-[25px] mr-[2px] flex items-center justify-center border border-l-white border-t-white border-r-[#8c897c] border-b-[#8c897c]">
          <svg viewBox="0 0 5 16" className="w-[5px] h-4" fill="none" stroke="#aaa698"><path d="M4.500 1L1 8l3.500 7" /></svg>
        </button>
        <div className="flex-1 flex h-[25px] border-t-2 border-[#77756a]">
          {parts.map(({ name, symbol }) => (
            <button key={name} type="button" title={name} aria-label={name} className="flex-1 min-w-0 bg-[#ece9d8] border-r border-[#444]">
              <svg viewBox="0 0 26 25" className="w-full h-full" fill="none" stroke="#1a1a1a" strokeWidth="1.200" aria-hidden="true">
                {symbol}
              </svg>
            </button>
          ))}
          {emptySlots.map((slot) => (
            <div key={slot} className="flex-1 min-w-0 bg-white border-r border-[#666]" />
          ))}
        </div>
        <button type="button" aria-label="More parts" className="w-[9px] h-[25px] ml-[2px] flex items-center justify-center border border-l-white border-t-white border-r-[#8c897c] border-b-[#8c897c]">
          <svg viewBox="0 0 5 16" className="w-[5px] h-4" fill="none" stroke="#b8b4a4"><path d="M.5 1L4 8l-3.500 7" /></svg>
        </button>
      </div>

      <div className="h-4 shrink-0 flex items-start pl-[7px] bg-[#f4f2e8] border-t border-[#333] text-[8px] font-['DejaVu_Sans','Noto_Sans_CJK_JP',sans-serif]">
        {paletteTabs.map((tab, i) => (
          <SheetTab key={tab} selected={i === 0}>{tab}</SheetTab>
        ))}
      </div>

      <div className="flex-1 min-h-[416px] flex bg-white">
        <div className="relative flex-1 min-w-0 overflow-hidden">
          <div className="absolute inset-0">
            <Schematic />
          </div>
          <BodeWindow />
        </div>
        <div className="w-3 flex flex-col bg-[#f4f2e8]">
          <ScrollButton label="Scroll up" d="M1 5h5L3.500 2z" />
          <div className="h-[43px] bg-[#ece9d8] border border-l-white border-t-white border-r-[#8c897c] border-b-[#8c897c]" />
          <div className="mt-auto flex">
            <ScrollButton label="Scroll down" d="M1 2h5L3.500 5z" />
          </div>
        </div>
      </div>

      <div className="h-[14px] shrink-0 flex items-center bg-[#f4f2e8]">
        <ScrollButton label="Scroll left" d="M5 1v5L2 3.500z" />
        <div className="w-[151px] h-3 bg-[#ece9d8] border border-l-white border-t-white border-r-[#8c897c] border-b-[#8c897c]" />
        <div className="ml-auto flex">
          <ScrollButton label="Scroll right" d="M2 1v5l3-2.500z" />
          <div className="w-3 bg-[#ece9d8]" />
        </div>
      </div>

      <div className="h-[14px] shrink-0 flex items-start pl-1 bg-[#f4f2e8] border-t-2 border-[#77756a]">
        <SheetTab selected className="text-[9px]">5_04</SheetTab>
      </div>
    </main>
  );
}
